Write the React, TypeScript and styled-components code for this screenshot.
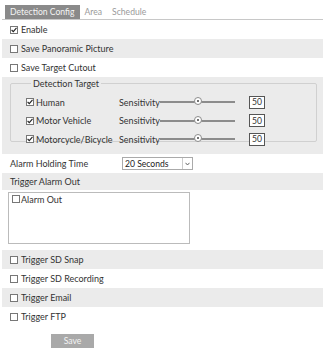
import { createGlobalStyle } from "styled-components";
import styled from "styled-components";

const GlobalStyle = createGlobalStyle`
  body {
    margin: 0;
    background: #fff;
    font-family: Lato, "Open Sans", sans-serif;
    font-size: 9px;
    color: #333;
  }
`;

const Page = styled.div`
  width: 321px;
  padding: 5px 1px 0 2px;
`;

const TabBar = styled.div`
  display: flex;
  align-items: stretch;
  height: 14px;
  border-bottom: 1px solid #c8c8c8;
  padding-left: 3px;
`;

const Tab = styled.div<{ $active?: boolean }>`
  display: flex;
  align-items: center;
  padding: 0 5px;
  font-size: 8.6px;
  color: ${(p) => (p.$active ? "#f4f4f4" : "#9a9a9a")};
  background: ${(p) => (p.$active ? "#8a8a8a" : "transparent")};
`;

const Row = styled.div<{ $gray?: boolean; $h?: number }>`
  display: flex;
  align-items: center;
  height: ${(p) => p.$h ?? 19}px;
  padding-left: 8px;
  background: ${(p) => (p.$gray ? "#ebebeb" : "#fff")};
`;

const Box = styled.span<{ $gap?: number }>`
  display: inline-flex;
  align-items: center;
  justify-content: center;
  width: 6px;
  height: 6px;
  border: 1px solid #777;
  background: #fff;
  margin-right: ${(p) => p.$gap ?? 3}px;
  flex: none;
`;

const GroupWrap = styled.div`
  background: #ebebeb;
  padding: 1px 6px 2px 8px;
  height: 74px;
`;

const Fieldset = styled.fieldset`
  margin: 0;
  padding: 4px 0 0 15px;
  border: 1px solid #d0d0d0;
  border-radius: 2px;
  height: 64px;
  box-sizing: border-box;
`;

const Legend = styled.legend`
  padding: 0 2px;
  margin-left: 5px;
  font-size: 9px;
  color: #333;
`;

const TargetRow = styled.div`
  display: grid;
  grid-template-columns: 93px 41px 75px 14px 16px;
  align-items: center;
  height: 18.5px;
`;

const Label = styled.span`
  display: flex;
  align-items: center;
`;

const Track = styled.div`
  position: relative;
  height: 2px;
  background: #8c8c8c;
`;

const Thumb = styled.span`
  position: absolute;
  top: -4px;
  width: 8px;
  height: 8px;
  margin-left: -4px;
  border-radius: 50%;
  border: 1px solid #8c8c8c;
  background: #fff;
  box-sizing: border-box;
  display: flex;
  align-items: center;
  justify-content: center;
  &::after {
    content: "";
    width: 2px;
    height: 2px;
    border-radius: 50%;
    background: #444;
  }
`;

const NumBox = styled.span`
  grid-column: 5;
  display: flex;
  align-items: center;
  justify-content: center;
  height: 11px;
  border: 1px solid #555;
  font-size: 8.6px;
  background: #fff;
`;

const HoldLabel = styled.span`
  width: 112px;
`;

const Select = styled.div`
  display: flex;
  align-items: stretch;
  width: 69px;
  height: 11px;
  border: 1px solid #aaa;
  font-size: 8.6px;
`;

const SelectText = styled.span`
  flex: 1;
  padding-left: 2px;
  display: flex;
  align-items: center;
  color: #222;
`;

const SelectArrow = styled.span`
  width: 9px;
  border-left: 1px solid #ccc;
  display: flex;
  align-items: center;
  justify-content: center;
`;

const AlarmBox = styled.div`
  margin: 2px 0 6px 6px;
  width: 182px;
  height: 52px;
  border: 1px solid #bbb;
  padding: 1px 3px;
  box-sizing: border-box;
`;

const AlarmItem = styled.div`
  display: flex;
  align-items: center;
  height: 10px;
`;

const Footer = styled.div`
  padding: 8px 0 0 49px;
`;

const SaveButton = styled.button`
  width: 43px;
  height: 14px;
  border: none;
  background: #a9a9a9;
  color: #f4f4f4;
  font-family: Lato, "Open Sans", sans-serif;
  font-size: 8.6px;
  padding: 0;
`;

function Check({ checked, gap }: { checked?: boolean; gap?: number }) {
  return (
    <Box $gap={gap}>
      {checked && (
        <svg width="6" height="6" viewBox="0 0 6 6">
          <path d="M0.6 3 L2.3 4.7 L5.5 0.9" stroke="#222" strokeWidth="1.1" fill="none" />
        </svg>
      )}
    </Box>
  );
}

const targets = ["Human", "Motor Vehicle", "Motorcycle/Bicycle"];

export default function App() {
  return (
    <>
      <GlobalStyle />
      <Page>
        <TabBar>
          <Tab $active>Detection Config</Tab>
          <Tab>Area</Tab>
          <Tab>Schedule</Tab>
        </TabBar>
        <Row>
          <Check checked />
          Enable
        </Row>
        <Row $gray>
          <Check />
          Save Panoramic Picture
        </Row>
        <Row>
          <Check />
          Save Target Cutout
        </Row>
        <GroupWrap>
          <Fieldset>
            <Legend>Detection Target</Legend>
            {targets.map((t) => (
              <TargetRow key={t}>
                <Label>
                  <Check checked gap={2} />
                  {t}
                </Label>
                <span>Sensitivity</span>
                <Track>
                  <Thumb style={{ left: "50%" }} />
                </Track>
                <NumBox>50</NumBox>
              </TargetRow>
            ))}
          </Fieldset>
        </GroupWrap>
        <Row>
          <HoldLabel>Alarm Holding Time</HoldLabel>
          <Select>
            <SelectText>20 Seconds</SelectText>
            <SelectArrow>
              <svg width="5" height="4" viewBox="0 0 5 4">
                <path d="M0.5 0.8 L2.5 3 L4.5 0.8" stroke="#555" strokeWidth="0.9" fill="none" />
              </svg>
            </SelectArrow>
          </Select>
        </Row>
        <Row $gray $h={17}>
          Trigger Alarm Out
        </Row>
        <AlarmBox>
          <AlarmItem>
            <Check gap={1} />
            Alarm Out
          </AlarmItem>
        </AlarmBox>
        <Row $gray>
          <Check />
          Trigger SD Snap
        </Row>
        <Row>
          <Check />
          Trigger SD Recording
        </Row>
        <Row $gray>
          <Check />
          Trigger Email
        </Row>
        <Row>
          <Check />
          Trigger FTP
        </Row>
        <Footer>
          <SaveButton>Save</SaveButton>
        </Footer>
      </Page>
    </>
  );
}
